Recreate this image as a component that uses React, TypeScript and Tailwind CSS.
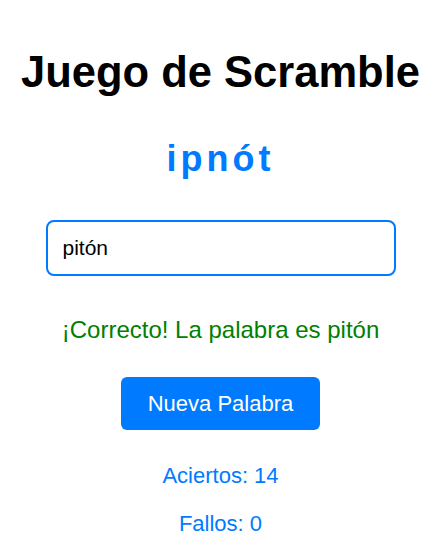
export default function App () {
    return (
        <div className="min-h-screen bg-white flex flex-col items-center pr-[2px] font-['Liberation_Sans',Arial,sans-serif]">
            {/* Title */}
            <h1 className="mt-[51px] text-[43.5px] leading-none font-bold text-black">
                Juego de Scramble
            </h1>

            {/* Scrambled word */}
            <p className="mt-[46px] text-[36px] leading-none font-bold tracking-[4px] text-[#007bff]">
                ipnót
            </p>

            {/* Guess input */}
            <input
                type="text"
                defaultValue="pitón"
                className="mt-[43px] w-[350px] h-[56px] border-2 border-[#007bff] rounded-lg px-[15px] text-[21px] text-black outline-none"
            />

            {/* Feedback */}
            <p className="mt-[42px] text-[24px] leading-none text-[#008000]">
                ¡Correcto! La palabra es pitón
            </p>

            {/* New word */}
            <button className="mt-[35px] w-[199px] h-[53px] rounded-md bg-[#007bff] text-white text-[22px]">
                Nueva Palabra
            </button>

            {/* Score */}
            <p className="mt-[35px] text-[22px] leading-none text-[#007bff]">Aciertos: 14</p>
            <p className="mt-[26px] text-[22px] leading-none text-[#007bff]">Fallos: 0</p>
        </div>
    )
}
